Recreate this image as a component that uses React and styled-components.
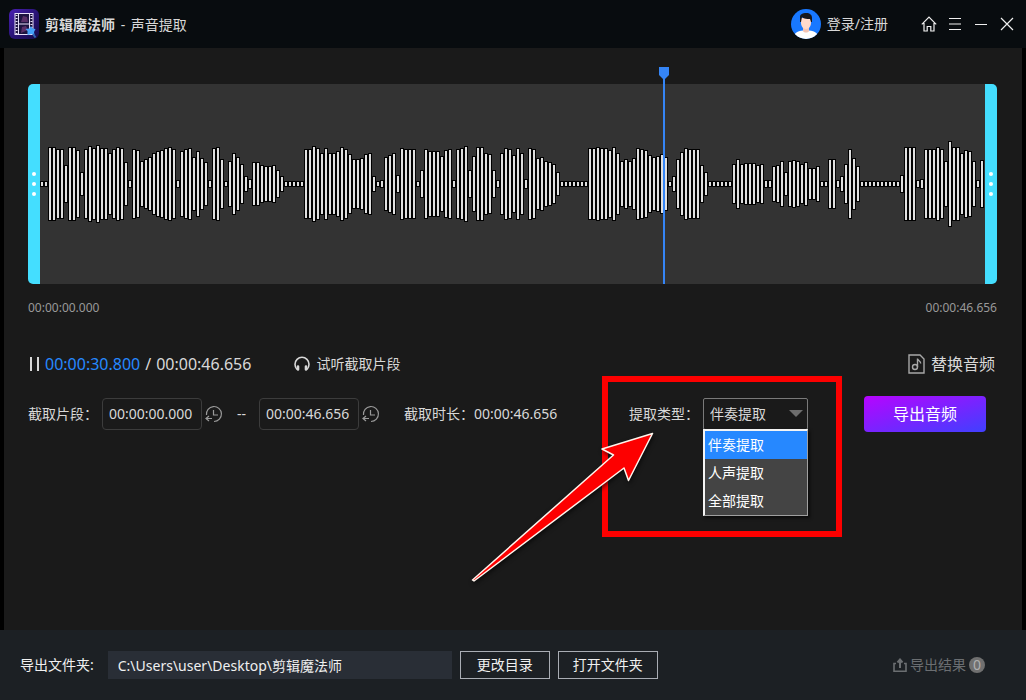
import React, { useState } from 'react';
import styled, { createGlobalStyle, ThemeProvider } from 'styled-components';

const theme = {
  fonts: {
    sans: '"Noto Sans", "Noto Sans CJK SC", sans-serif',
  },
  colors: {
    bar: '#080c0f',
    main: '#1a1a1a',
    wave: '#333333',
    handle: '#44deff',
    accent: '#2688ff',
    footer: '#1c2024',
    path: '#292e36',
    text: '#d8d8d8',
    muted: '#999999',
    mark: '#fd0000',
  },
};

const DURATION = 46.656;
const POSITION = 30.8;

// half height of every bar of the track, one bar per 4px
const PEAKS = [
  2, 2, 36, 36, 34, 34, 18, 36, 36, 33, 11, 34, 37, 35, 38, 35, 35, 30, 34, 36,
  35, 21, 3, 34, 33, 22, 24, 26, 30, 32, 33, 35, 36, 34, 3, 32, 34, 35, 26, 32,
  25, 21, 3, 35, 36, 24, 2, 22, 30, 26, 19, 7, 4, 21, 21, 18, 17, 17, 18, 13,
  7, 2, 2, 2, 2, 2, 34, 34, 37, 35, 30, 35, 30, 30, 32, 36, 34, 29, 24, 24,
  25, 29, 30, 7, 2, 3, 26, 28, 30, 8, 35, 34, 34, 34, 2, 13, 34, 32, 32, 32,
  27, 33, 34, 3, 34, 35, 37, 13, 27, 36, 36, 30, 29, 13, 3, 30, 35, 34, 28, 35,
  30, 4, 35, 34, 25, 26, 22, 21, 19, 11, 2, 2, 2, 2, 2, 2, 2, 35, 35, 36,
  35, 35, 33, 36, 30, 22, 24, 22, 25, 35, 34, 33, 28, 26, 27, 29, 26, 2, 7, 24,
  31, 35, 34, 34, 34, 18, 11, 2, 2, 2, 2, 2, 2, 19, 24, 19, 20, 20, 20, 18,
  19, 3, 3, 17, 18, 22, 11, 22, 23, 22, 19, 21, 15, 15, 17, 2, 2, 24, 24, 3,
  7, 19, 34, 25, 17, 2, 2, 2, 2, 2, 2, 2, 2, 2, 2, 8, 36, 36, 36, 3,
  4, 34, 34, 34, 36, 34, 22, 42, 36, 36, 30, 33, 32, 22, 3, 23,
];

const TYPES = ['伴奏提取', '人声提取', '全部提取'];

const LogoIcon = () => (
  <svg width="30" height="30" viewBox="0 0 30 30" aria-hidden="true">
    <defs>
      <linearGradient id="logo" x1="0" y1="0" x2="1" y2="1">
        <stop offset="0" stopColor="#4a1fb4" />
        <stop offset="0.5" stopColor="#2a1478" />
        <stop offset="1" stopColor="#160c48" />
      </linearGradient>
    </defs>
    <rect width="30" height="30" rx="6" fill="url(#logo)" />
    <rect x="6" y="4.5" width="18" height="21" fill="#1d1440" stroke="#e6def8" />
    <path d="M9.5 5v20M20.5 5v20M10 15h10" stroke="#e6def8" />
    <path d="M7.5 6v19M22.5 6v19" stroke="#e6def8" strokeWidth="2" strokeDasharray="1 2" />
    <path d="M12 13l2-6 4 1 1 5zM12 24l1-6 4-1 2 4z" fill="#5a2f68" />
    <path d="M22 17l1.500 2.500 3 .5-1.500 3 .5 3-3-1-4 1v-4l-2-2 4-.5z" fill="#45a2fa" />
    <path d="M24 25l2.500 3.500" stroke="#2f66b4" strokeWidth="2" />
  </svg>
);

const AvatarIcon = () => (
  <svg width="30" height="30" viewBox="0 0 30 30" aria-hidden="true">
    <defs>
      <clipPath id="avatar"><circle cx="15" cy="15" r="15" /></clipPath>
    </defs>
    <g clipPath="url(#avatar)">
      <rect width="30" height="30" fill="#1878ff" />
      <path d="M2 30c0-5 4-8 10-8.500h6c6 .5 10 3.500 10 8.500z" fill="#ffffff" />
      <path d="M12 17h6v5c-1 2-5 2-6 0z" fill="#f4c4b4" />
      <path d="M10 9h10v5c0 3-2 6-5 6s-5-3-5-6z" fill="#ffd9cb" />
      <path d="M9 13V8c0-3 3-4 6-4 4 0 6 2 6 5v4h-1l-1-3c-3 0-6 0-8-2l-1 5z" fill="#17171d" />
    </g>
  </svg>
);

const HomeIcon = () => (
  <svg width="16" height="16" viewBox="0 0 16 16" fill="none" stroke="currentColor" strokeWidth="1.2">
    <path d="M.8 8.300L8 1l7.200 7.300M3 7v8h3.200v-4.500h3.600V15H13V7" />
  </svg>
);

const MenuIcon = () => (
  <svg width="16" height="16" viewBox="0 0 16 16" stroke="currentColor">
    <path d="M2 2.500h12M2 8h12M2 13.500h12" />
  </svg>
);

const MinimizeIcon = () => (
  <svg width="16" height="16" viewBox="0 0 16 16" stroke="currentColor">
    <path d="M2 8.500h12" />
  </svg>
);

const CloseIcon = () => (
  <svg width="16" height="16" viewBox="0 0 16 16" stroke="currentColor" strokeWidth="1.2">
    <path d="M2 2l12 12M14 2L2 14" />
  </svg>
);

const PauseIcon = () => (
  <svg width="12" height="16" viewBox="0 0 12 16" fill="currentColor">
    <path d="M2 1h2v14H2zM9 1h2v14H9z" />
  </svg>
);

const HeadphoneIcon = () => (
  <svg width="16" height="16" viewBox="0 0 16 16" fill="none" stroke="currentColor" strokeWidth="1.6">
    <path d="M3 13.500C1.500 12 1 10 1 8.300a7 7 0 0 1 14 0c0 1.700-.5 3.700-2 5.200" />
    <path d="M4 10.500v3M12 10.500v3" strokeWidth="2.600" strokeLinecap="round" />
  </svg>
);

const RestoreIcon = () => (
  <svg width="18" height="18" viewBox="0 0 18 18" fill="none" stroke="currentColor" strokeWidth="1.2">
    <path d="M1.500 10A7.500 7.500 0 1 1 9 16.500" />
    <path d="M8.500 5v5H13M1 13.500h6M4 11l-3 2.500L4 16" />
  </svg>
);

const MusicFileIcon = () => (
  <svg width="17" height="20" viewBox="0 0 17 20" fill="none" stroke="currentColor" strokeWidth="1.4">
    <path d="M1 1h11l4 4v14H1z" />
    <path d="M9.500 13V4.500c.3 2.500 3.200 2 3.200 5" />
    <circle cx="7" cy="13" r="2.500" />
  </svg>
);

const ExportIcon = () => (
  <svg width="14" height="14" viewBox="0 0 14 14" fill="none" stroke="currentColor" strokeWidth="1.6">
    <path d="M3 5.500H1v7.700h12V5.500h-2" />
    <path d="M7 10V2M4.500 4.500L7 1.500l2.500 3" strokeWidth="2" />
  </svg>
);

const Waveform = () => (
  <Wave aria-hidden="true">
    {PEAKS.map((peak, i) => (
      <g key={i}>
        <rect x={i * 4} y={99 - peak} width="4" height={peak * 2 + 2} fill="#000000" />
        <rect x={i * 4 + 1} y={100 - peak} width="2" height={peak * 2} fill="#dedede" />
      </g>
    ))}
  </Wave>
);

const TrimField = ({ id, label, value }) => {
  const [time, setTime] = useState(value);
  return (
    <TrimBox>
      <TimeInput id={id} aria-label={label} value={time} onChange={e => setTime(e.target.value)} />
      <RestoreButton aria-label="重置" onClick={() => setTime(value)}>
        <RestoreIcon />
      </RestoreButton>
    </TrimBox>
  );
};

const App = () => {
  const [type, setType] = useState(TYPES[0]);
  return (
    <ThemeProvider theme={theme}>
      <GlobalStyle />
      <Window>
        <TitleBar>
          <LogoIcon />
          <Title><strong>剪辑魔法师</strong> <span>-</span> 声音提取</Title>
          <Login>
            <AvatarIcon />
            登录/注册
          </Login>
          <WindowButtons>
            <IconButton aria-label="主页"><HomeIcon /></IconButton>
            <IconButton aria-label="菜单"><MenuIcon /></IconButton>
            <IconButton aria-label="最小化"><MinimizeIcon /></IconButton>
            <IconButton aria-label="关闭"><CloseIcon /></IconButton>
          </WindowButtons>
        </TitleBar>

        <Main>
          <Track>
            <Handle side="left"><i /><i /><i /></Handle>
            <TrackBody>
              <Waveform />
              <Playhead style={{ left: `${(POSITION / DURATION) * 100}%` }}>
                <svg width="12" height="12" viewBox="0 0 12 12">
                  <path d="M1 0h10v8l-4 4H5L1 8z" fill="#3585f6" />
                </svg>
              </Playhead>
            </TrackBody>
            <Handle side="right"><i /><i /><i /></Handle>
          </Track>
          <Range>
            <span>00:00:00.000</span>
            <span>00:00:46.656</span>
          </Range>

          <Player>
            <PlayerButton aria-label="暂停"><PauseIcon /></PlayerButton>
            <Clock><b>00:00:30.800</b><span>/</span>00:00:46.656</Clock>
            <PreviewButton>
              <HeadphoneIcon />
              试听截取片段
            </PreviewButton>
            <ReplaceButton>
              <MusicFileIcon />
              替换音频
            </ReplaceButton>
          </Player>

          <Settings>
            <Group>
              <Label htmlFor="start">截取片段：</Label>
              <TrimField id="start" label="截取片段开始" value="00:00:00.000" />
              <Dash>--</Dash>
              <TrimField id="end" label="截取片段结束" value="00:00:46.656" />
              <Length>截取时长：00:00:46.656</Length>
            </Group>
            <Group>
              <TypeField>
                <Label htmlFor="type">提取类型：</Label>
                <SelectBox>
                  <Select id="type" value={type} onChange={e => setType(e.target.value)}>
                    {TYPES.map(name => <option key={name}>{name}</option>)}
                  </Select>
                  <Options>
                    {TYPES.map(name => (
                      <li key={name}>
                        <Option active={name === type} onClick={() => setType(name)}>{name}</Option>
                      </li>
                    ))}
                  </Options>
                </SelectBox>
                <Highlight>
                  <svg width="190" height="156" viewBox="0 0 190 156">
                    <path
                      d="M184.500 3.500L134 19l11.500 6L4.500 150l1.500 1L156 38l4.500 12.500z"
                      fill={theme.colors.mark}
                      stroke="#fff4ec"
                      strokeWidth="1.500"
                      strokeLinejoin="round"
                    />
                  </svg>
                </Highlight>
              </TypeField>
              <ExportButton>导出音频</ExportButton>
            </Group>
          </Settings>
        </Main>

        <Footer>
          <label htmlFor="folder">导出文件夹:</label>
          <PathInput id="folder" readOnly value="C:\Users\user\Desktop\剪辑魔法师" />
          <OutlineButton>更改目录</OutlineButton>
          <OutlineButton>打开文件夹</OutlineButton>
          <Results>
            <ExportIcon />
            导出结果
            <Badge>0</Badge>
          </Results>
        </Footer>
      </Window>
    </ThemeProvider>
  );
};

export default App;

const GlobalStyle = createGlobalStyle`
  * {
    box-sizing: border-box;
  }
  body {
    margin: 0;
    background: #000000;
  }
  button, input, select {
    font: inherit;
    color: inherit;
    margin: 0;
  }
  svg {
    display: block;
    flex: none;
  }
`;

const Window = styled.div`
  min-height: 100vh;
  display: flex;
  flex-direction: column;
  background: #000000;
  color: ${props => props.theme.colors.text};
  font-family: ${props => props.theme.fonts.sans};
  font-size: 14px;
  line-height: 20px;
  white-space: nowrap;
`;

const TitleBar = styled.header`
  display: flex;
  align-items: center;
  height: 48px;
  padding: 0 6px 0 9px;
  background: ${props => props.theme.colors.bar};
`;

const Title = styled.h1`
  margin: 0 auto 0 6px;
  padding-top: 2px;
  font-size: 14px;
  font-weight: 400;
  strong {
    font-weight: 600;
  }
  span {
    margin: 0 2px;
  }
`;

const PlainButton = styled.button`
  display: flex;
  align-items: center;
  padding: 0;
  border: 0;
  background: none;
  cursor: pointer;
`;

const Login = styled(PlainButton)`
  gap: 6px;
  margin-right: 28px;
`;

const WindowButtons = styled.div`
  display: flex;
`;

const IconButton = styled(PlainButton)`
  justify-content: center;
  width: 26px;
  height: 26px;
  color: #f0f0f0;
`;

const Main = styled.main`
  flex: 1;
  margin: 0 4px;
  padding: 36px 25px 0 24px;
  background: ${props => props.theme.colors.main};
`;

const Track = styled.div`
  display: flex;
  height: 200px;
`;

const TrackBody = styled.div`
  position: relative;
  flex: 1;
  background: ${props => props.theme.colors.wave};
`;

const Wave = styled.svg`
  width: 100%;
  height: 200px;
`;

const Handle = styled.div`
  display: flex;
  flex-direction: column;
  align-items: center;
  justify-content: center;
  gap: 6px;
  width: 12px;
  background: ${props => props.theme.colors.handle};
  border-radius: ${props => (props.side === 'left' ? '5px 0 0 5px' : '0 5px 5px 0')};
  i {
    width: 4px;
    height: 4px;
    border-radius: 50%;
    background: #ffffff;
  }
`;

const Playhead = styled.div`
  position: absolute;
  top: -17px;
  bottom: 0;
  width: 12px;
  margin-left: -6px;
  background: linear-gradient(#3585f6, #3585f6) center / 2px 100% no-repeat;
`;

const Range = styled.div`
  display: flex;
  justify-content: space-between;
  margin-top: 16px;
  color: ${props => props.theme.colors.muted};
  font-size: 12px;
  line-height: 16px;
`;

const Player = styled.div`
  display: flex;
  align-items: center;
  height: 24px;
  margin-top: 36px;
`;

const PlayerButton = styled(PlainButton)`
  margin-right: 5px;
`;

const Clock = styled.div`
  font-size: 16px;
  b {
    font-weight: 400;
    color: ${props => props.theme.colors.accent};
  }
  span {
    margin: 0 5px;
  }
`;

const PreviewButton = styled(PlainButton)`
  gap: 6px;
  margin-left: 43px;
`;

const ReplaceButton = styled(PlainButton)`
  gap: 6px;
  margin-left: auto;
  margin-right: 2px;
  font-size: 16px;
  svg {
    color: #a8a8a8;
  }
`;

const Settings = styled.div`
  display: flex;
  align-items: center;
  justify-content: space-between;
  height: 36px;
  margin-top: 20px;
  padding-right: 11px;
`;

const Group = styled.div`
  display: flex;
  align-items: center;
`;

const Label = styled.label`
  margin-right: 4px;
`;

const TrimBox = styled.div`
  display: flex;
  align-items: center;
  gap: 2px;
`;

const TimeInput = styled.input`
  width: 100px;
  height: 32px;
  padding: 0 6px 2px;
  border: 1px solid #3c3c3c;
  border-radius: 4px;
  background: transparent;
`;

const RestoreButton = styled(PlainButton)`
  justify-content: center;
  width: 20px;
  height: 20px;
  color: #9a9a9a;
`;

const Dash = styled.span`
  width: 35px;
  text-align: center;
`;

const Length = styled.span`
  margin-left: 23px;
`;

const TypeField = styled.div`
  position: relative;
  display: flex;
  align-items: center;
  height: 36px;
  margin-right: 56px;
`;

const SelectBox = styled.div`
  position: relative;
  width: 105px;
  &::after {
    content: '';
    position: absolute;
    top: 12px;
    right: 5px;
    border: 7px solid transparent;
    border-top-color: #6e6e6e;
    border-bottom: 0;
    pointer-events: none;
  }
`;

const Select = styled.select`
  display: block;
  appearance: none;
  width: 100%;
  height: 32px;
  padding: 0 6px;
  border: 1px solid #7a7a7a;
  border-radius: 2px;
  background: transparent;
`;

const Options = styled.ul`
  position: absolute;
  top: 31px;
  left: 0;
  width: 100%;
  margin: 0;
  padding: 0;
  list-style: none;
  border: 2px solid #f4f4f4;
  border-right: 1px solid #a0a0a0;
  border-bottom: 1px solid #a0a0a0;
  background: #444444;
  box-shadow: 2px 2px 3px rgba(0, 0, 0, 0.6);
`;

const Option = styled(PlainButton).withConfig({
  shouldForwardProp: prop => prop !== 'active',
})`
  width: 100%;
  height: 28px;
  padding: 0 3px;
  color: #ffffff;
  background: ${props => (props.active ? props.theme.colors.accent : 'transparent')};
`;

const Highlight = styled.div`
  position: absolute;
  top: -20px;
  left: -27px;
  width: 240px;
  height: 161px;
  border: 6px solid ${props => props.theme.colors.mark};
  pointer-events: none;
  svg {
    position: absolute;
    top: 48px;
    left: -140px;
    filter: drop-shadow(1px 2px 2px rgba(0, 0, 0, 0.6));
  }
`;

const ExportButton = styled.button`
  width: 122px;
  height: 36px;
  border: 0;
  border-radius: 4px;
  background: linear-gradient(to bottom right, #b704ff, #4040ff);
  color: #ffffff;
  font-size: 16px;
  cursor: pointer;
`;

const Footer = styled.footer`
  display: flex;
  align-items: center;
  gap: 8px;
  height: 70px;
  padding: 0 41px 0 20px;
  background: ${props => props.theme.colors.footer};
  color: #f0f0f0;
`;

const PathInput = styled.input`
  width: 344px;
  height: 28px;
  margin-left: 6px;
  padding: 0 10px;
  border: 0;
  background: ${props => props.theme.colors.path};
`;

const OutlineButton = styled.button`
  height: 28px;
  padding: 0 16px;
  border: 1px solid #a9adb4;
  background: transparent;
  cursor: pointer;
  & + & {
    padding: 0 14px;
  }
`;

const Results = styled(PlainButton)`
  gap: 3px;
  margin-left: auto;
  color: #6b6e71;
`;

const Badge = styled.span`
  width: 16px;
  height: 16px;
  border-radius: 50%;
  background: #707070;
  color: #b0b0b0;
  line-height: 16px;
  text-align: center;
`;
